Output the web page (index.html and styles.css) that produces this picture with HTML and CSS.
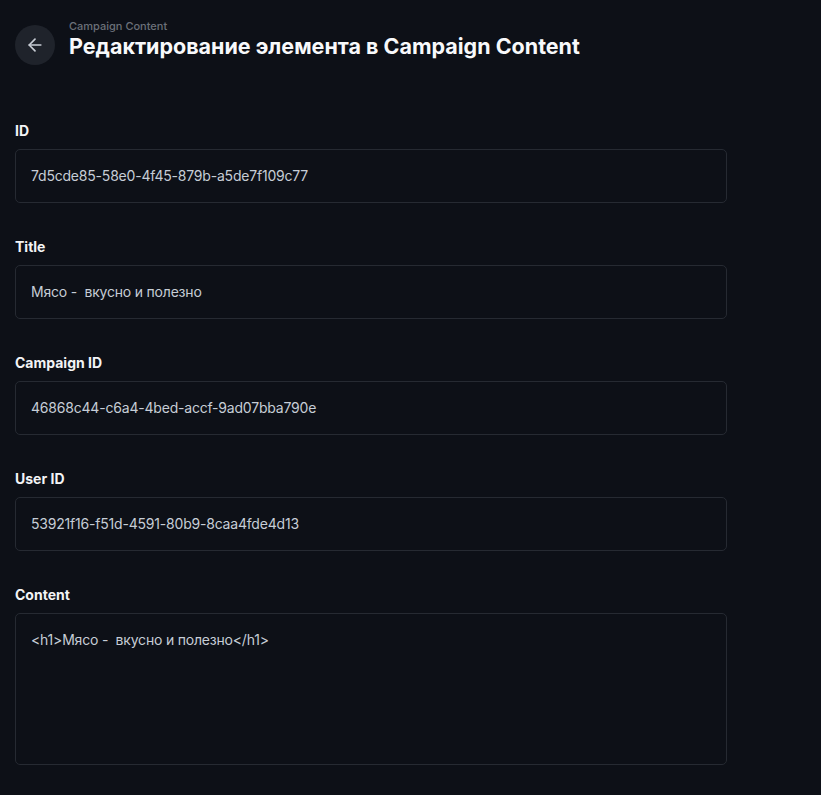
FILE: index.html
```html
<!DOCTYPE html>
<html lang="ru">
<head>
<meta charset="utf-8">
<link rel="stylesheet" href="styles.css">
</head>
<body>
<div class="page">
  <header class="header">
    <button class="back" aria-label="Назад">
      <svg width="20" height="20" viewBox="0 0 24 24" fill="none" stroke="currentColor" stroke-width="2" stroke-linecap="round" stroke-linejoin="round"><path d="M19 12H5"/><path d="M12 19l-7-7 7-7"/></svg>
    </button>
    <div class="titles">
      <div class="subtitle">Campaign Content</div>
      <h1 class="title">Редактирование элемента в Campaign Content</h1>
    </div>
  </header>
  <form class="form">
    <div class="field">
      <label class="label">ID</label>
      <div class="input">7d5cde85-58e0-4f45-879b-a5de7f109c77</div>
    </div>
    <div class="field">
      <label class="label">Title</label>
      <div class="input">Мясо -&nbsp; вкусно и полезно</div>
    </div>
    <div class="field">
      <label class="label">Campaign ID</label>
      <div class="input">46868c44-c6a4-4bed-accf-9ad07bba790e</div>
    </div>
    <div class="field">
      <label class="label">User ID</label>
      <div class="input">53921f16-f51d-4591-80b9-8caa4fde4d13</div>
    </div>
    <div class="field">
      <label class="label">Content</label>
      <div class="input textarea">&lt;h1&gt;Мясо -&nbsp; вкусно и полезно&lt;/h1&gt;</div>
    </div>
  </form>
</div>
</body>
</html>
```
FILE: styles.css
```css
html, body {
  margin: 0;
  background: #0d1017;
  font-family: Inter, "Noto Sans", sans-serif;
  color: #e6e8ec;
}
.page {
  padding: 13px 15px 0 15px;
  width: 712px;
}
.header {
  display: flex;
  align-items: center;
  gap: 14px;
}
.back {
  width: 40px;
  height: 40px;
  border-radius: 50%;
  border: none;
  background: #1f232b;
  color: #c9ced6;
  display: flex;
  align-items: center;
  justify-content: center;
  padding: 0;
  margin-top: 12px;
}
.titles {
  display: flex;
  flex-direction: column;
}
.subtitle {
  font-size: 11px;
  line-height: 14px;
  color: #6b7079;
  font-weight: 500;
}
.title {
  margin: 0;
  font-size: 21.5px;
  line-height: 26px;
  font-weight: 700;
  color: #f8f9fb;
}
.form {
  display: flex;
  flex-direction: column;
  gap: 34px;
  margin-top: 56px;
}
.field {
  display: flex;
  flex-direction: column;
  gap: 8px;
}
.label {
  font-size: 14px;
  line-height: 20px;
  font-weight: 700;
  color: #f3f4f6;
}
.input {
  height: 54px;
  box-sizing: border-box;
  border: 1px solid #262a32;
  border-radius: 5px;
  padding: 16px 15px;
  font-size: 14px;
  line-height: 20px;
  letter-spacing: -0.2px;
  color: #c6cdd6;
}
.textarea {
  height: 152px;
  padding-top: 16px;
}
```
